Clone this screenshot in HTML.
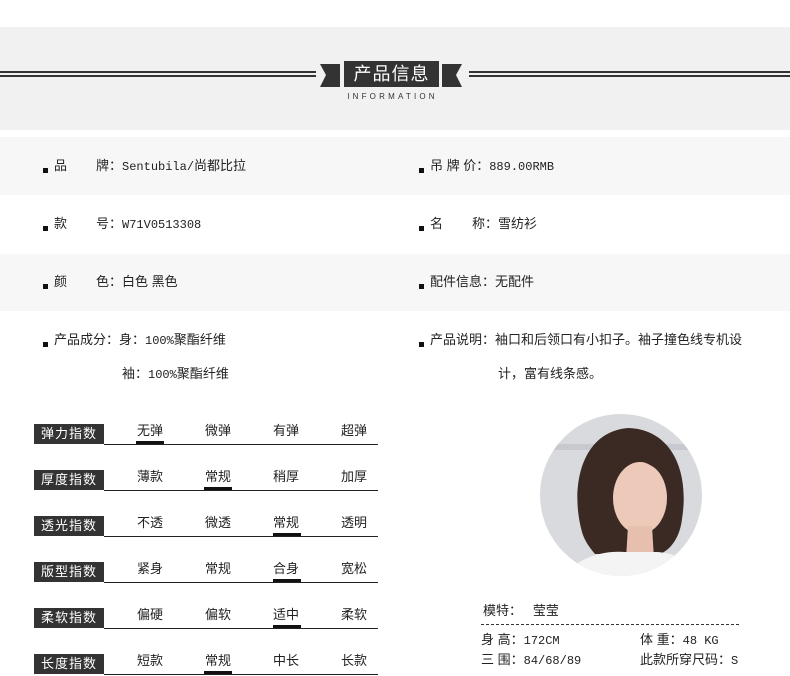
<!DOCTYPE html>
<html><head><meta charset="utf-8"><style>
*{margin:0;padding:0;box-sizing:border-box}
body{width:790px;height:676px;background:#fff;position:relative;overflow:hidden;font-family:"Liberation Sans","Noto Sans CJK SC",sans-serif;color:#222;font-size:13px}
.a{position:absolute}
.m{font-family:"Liberation Mono",monospace;font-size:12px}
.band{left:0;width:790px}
.it{position:absolute;white-space:nowrap;line-height:16px}
.b{position:absolute;width:5px;height:5px;background:#111}
.g{display:inline-block}
.lab{position:absolute;left:34px;width:70px;height:20px;background:#333;color:#fff;font-size:13px;text-align:center;line-height:20px;letter-spacing:1px}
.ln{position:absolute;left:104px;width:274px;height:1px;background:#222}
.op{position:absolute;width:60px;text-align:center;font-size:13px;line-height:16px}
.ul{position:absolute;width:28px;height:3px;background:#111}
</style></head><body>
<div class="a band" style="top:27px;height:103px;background:#f1f1f1"></div>
<div class="a" style="left:0;top:71px;width:316px;height:2px;background:#333"></div>
<div class="a" style="left:0;top:75px;width:316px;height:2px;background:#333"></div>
<div class="a" style="left:469px;top:71px;width:321px;height:2px;background:#333"></div>
<div class="a" style="left:469px;top:75px;width:321px;height:2px;background:#333"></div>
<svg class="a" style="left:320px;top:61px" width="150" height="30"><polygon points="0,3 20,3 20,26 0,26 6,14" fill="#333"/><polygon points="142,3 122,3 122,26 142,26 136,14" fill="#333"/></svg>
<div class="a" style="left:344px;top:61px;width:95px;height:26px;background:#333;color:#fff;font-size:18px;text-align:center;line-height:26px;letter-spacing:1px">产品信息</div>
<div class="a" style="left:320px;top:92px;width:145px;text-align:center;font-size:8px;letter-spacing:3.2px;color:#333">INFORMATION</div>

<div class="a band" style="top:137px;height:58px;background:#f7f7f7"></div>
<div class="a band" style="top:254px;height:57px;background:#f7f7f7"></div>

<div class="b" style="left:43px;top:168px"></div><div class="it" style="left:54px;top:158px"><span class="g" style="width:42px">品</span>牌：<span class="m">Sentubila/</span>尚都比拉</div>
<div class="b" style="left:419px;top:168px"></div><div class="it" style="left:430px;top:158px">吊 牌 价：<span class="m">889.00RMB</span></div>
<div class="b" style="left:43px;top:226px"></div><div class="it" style="left:54px;top:216px"><span class="g" style="width:42px">款</span>号：<span class="m">W71V0513308</span></div>
<div class="b" style="left:419px;top:226px"></div><div class="it" style="left:430px;top:216px"><span class="g" style="width:42px">名</span>称：雪纺衫</div>
<div class="b" style="left:43px;top:284px"></div><div class="it" style="left:54px;top:274px"><span class="g" style="width:42px">颜</span>色：白色 黑色</div>
<div class="b" style="left:419px;top:284px"></div><div class="it" style="left:430px;top:274px">配件信息：无配件</div>
<div class="b" style="left:43px;top:342px"></div><div class="it" style="left:54px;top:332px">产品成分：身：<span class="m">100%</span>聚酯纤维</div>
<div class="it" style="left:122px;top:366px">袖：<span class="m">100%</span>聚酯纤维</div>
<div class="b" style="left:419px;top:342px"></div><div class="it" style="left:430px;top:332px">产品说明：袖口和后领口有小扣子。袖子撞色线专机设</div>
<div class="it" style="left:498px;top:366px">计，富有线条感。</div>

<div class="lab" style="top:424px">弹力指数</div><div class="ln" style="top:444px"></div>
<div class="op" style="left:120px;top:423px">无弹</div><div class="op" style="left:188px;top:423px">微弹</div><div class="op" style="left:256px;top:423px">有弹</div><div class="op" style="left:324px;top:423px">超弹</div><div class="ul" style="left:136px;top:441px"></div>
<div class="lab" style="top:470px">厚度指数</div><div class="ln" style="top:490px"></div>
<div class="op" style="left:120px;top:469px">薄款</div><div class="op" style="left:188px;top:469px">常规</div><div class="op" style="left:256px;top:469px">稍厚</div><div class="op" style="left:324px;top:469px">加厚</div><div class="ul" style="left:204px;top:487px"></div>
<div class="lab" style="top:516px">透光指数</div><div class="ln" style="top:536px"></div>
<div class="op" style="left:120px;top:515px">不透</div><div class="op" style="left:188px;top:515px">微透</div><div class="op" style="left:256px;top:515px">常规</div><div class="op" style="left:324px;top:515px">透明</div><div class="ul" style="left:273px;top:533px"></div>
<div class="lab" style="top:562px">版型指数</div><div class="ln" style="top:582px"></div>
<div class="op" style="left:120px;top:561px">紧身</div><div class="op" style="left:188px;top:561px">常规</div><div class="op" style="left:256px;top:561px">合身</div><div class="op" style="left:324px;top:561px">宽松</div><div class="ul" style="left:273px;top:579px"></div>
<div class="lab" style="top:608px">柔软指数</div><div class="ln" style="top:628px"></div>
<div class="op" style="left:120px;top:607px">偏硬</div><div class="op" style="left:188px;top:607px">偏软</div><div class="op" style="left:256px;top:607px">适中</div><div class="op" style="left:324px;top:607px">柔软</div><div class="ul" style="left:273px;top:625px"></div>
<div class="lab" style="top:654px">长度指数</div><div class="ln" style="top:674px"></div>
<div class="op" style="left:120px;top:653px">短款</div><div class="op" style="left:188px;top:653px">常规</div><div class="op" style="left:256px;top:653px">中长</div><div class="op" style="left:324px;top:653px">长款</div><div class="ul" style="left:204px;top:671px"></div>

<svg class="a" style="left:540px;top:414px" width="162" height="162">
<defs><clipPath id="c"><circle cx="81" cy="81" r="81"/></clipPath></defs>
<g clip-path="url(#c)">
<rect width="162" height="162" fill="#d9dade"/>
<rect x="0" y="30" width="162" height="6" fill="#c8c9ce"/>
<path d="M42,118 C30,75 40,18 88,14 C130,15 150,55 142,105 C140,122 132,135 120,140 L55,140 C48,132 44,125 42,118Z" fill="#3b2a23"/>
<ellipse cx="100" cy="84" rx="27" ry="36" fill="#ecc9b8"/>
<path d="M88,112 L112,112 L114,145 L86,145Z" fill="#e6bfae"/>
<path d="M25,162 C35,145 62,136 85,138 L118,138 C140,140 152,150 158,162Z" fill="#f4f4f4"/>
<path d="M72,32 C92,20 128,32 130,72 C120,52 100,42 76,46Z" fill="#3b2a23"/>
</g></svg>

<div class="it" style="left:483px;top:603px;font-size:13px">模特：&nbsp;&nbsp;&nbsp;莹莹</div>
<div class="a" style="left:481px;top:624px;width:258px;border-top:1px dashed #333"></div>
<div class="it" style="left:481px;top:632px;font-size:13px">身 高：<span class="m">172CM</span></div>
<div class="it" style="left:481px;top:652px;font-size:13px">三 围：<span class="m">84/68/89</span></div>
<div class="it" style="left:640px;top:632px;font-size:13px">体 重：<span class="m">48 KG</span></div>
<div class="it" style="left:640px;top:652px;font-size:13px">此款所穿尺码：<span class="m">S</span></div>
</body></html>
